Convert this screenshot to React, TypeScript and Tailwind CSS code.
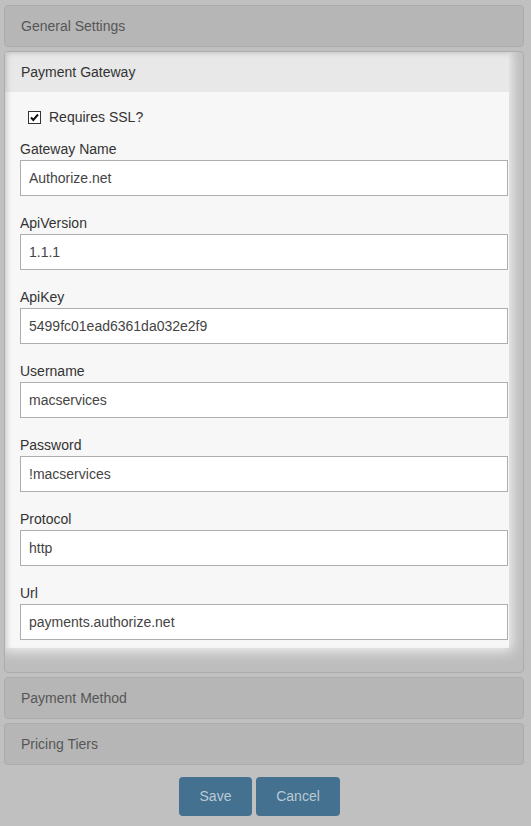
import React from "react";

const fields: { label: string; value: string }[] = [
  { label: "Gateway Name", value: "Authorize.net" },
  { label: "ApiVersion", value: "1.1.1" },
  { label: "ApiKey", value: "5499fc01ead6361da032e2f9" },
  { label: "Username", value: "macservices" },
  { label: "Password", value: "!macservices" },
  { label: "Protocol", value: "http" },
  { label: "Url", value: "payments.authorize.net" },
];

function Collapsed({ title, first }: { title: string; first?: boolean }) {
  return (
    <div
      className={
        (first ? "mt-[5px] " : "mt-[4px] ") +
        "h-[42px] border border-[#acacac] rounded-[4px] bg-[#b6b6b6] flex items-center pl-[16px] text-[14px] text-[#565656]"
      }
    >
      {title}
    </div>
  );
}

export default function App() {
  return (
    <div
      className="w-[531px] h-[826px] bg-[#c0c0c0] pl-[4px] pr-[7px] overflow-hidden"
      style={{ fontFamily: '"Liberation Sans", Arial, sans-serif' }}
    >
      <Collapsed title="General Settings" first />

      <div className="mt-[4px] border border-[#acacac] rounded-[4px] bg-[#bdbdbd] overflow-hidden pb-[24px]">
        <div className="mr-[14px] bg-[#f7f7f7] shadow-[inset_5px_0_6px_-4px_rgba(0,0,0,0.22),0_0_12px_3px_#f3f3f3]">
          <div className="h-[40px] bg-[#e8e8e8] flex items-center pl-[16px] text-[14px] text-[#333] shadow-[inset_5px_4px_6px_-4px_rgba(0,0,0,0.22)]">
            Payment Gateway
          </div>
          <div className="pl-[15px] pt-[15px] pb-[8px]">
            <div className="h-[20px] flex items-center mb-[12px]">
              <span className="ml-[8px] w-[13px] h-[13px] border border-[#333] bg-white flex items-center justify-center">
                <svg width="11" height="11" viewBox="0 0 11 11">
                  <path d="M2 5.5 L4.3 8 L9 2.5" fill="none" stroke="#111" strokeWidth="2" />
                </svg>
              </span>
              <span className="ml-[8px] text-[14px] text-[#333]">Requires SSL?</span>
            </div>
            {fields.map((f, i) => (
              <div key={f.label} className={i < fields.length - 1 ? "mb-[17px]" : ""}>
                <div className="h-[20px] leading-[20px] text-[14px] text-[#333] mb-[1px]">{f.label}</div>
                <div className="w-[488px] h-[36px] bg-white border border-[#aeaeae] flex items-center pl-[8px] text-[14px] text-[#444]">
                  {f.value}
                </div>
              </div>
            ))}
          </div>
        </div>
      </div>

      <Collapsed title="Payment Method" />
      <Collapsed title="Pricing Tiers" />

      <div className="mt-[12px] flex justify-center gap-[4px] pr-[9px]">
        <button className="w-[73px] h-[39px] rounded-[4px] bg-[#43718f] text-[14px] text-[#bccad5]">
          Save
        </button>
        <button className="w-[84px] h-[39px] rounded-[4px] bg-[#43718f] text-[14px] text-[#bccad5]">
          Cancel
        </button>
      </div>
    </div>
  );
}
